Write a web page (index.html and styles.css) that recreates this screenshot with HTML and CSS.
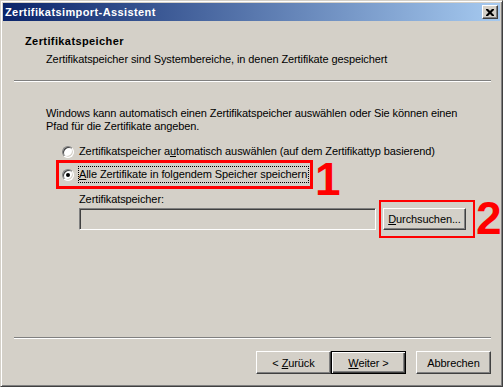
FILE: index.html
```html
<!DOCTYPE html>
<html lang="de">
  <head>
    <meta charset="UTF-8" />
    <title>Zertifikatsimport-Assistent</title>
    <link rel="stylesheet" href="styles.css">
  </head>
  <body>
    <div class="window">
      <div class="titlebar">
        <span class="title">Zertifikatsimport-Assistent</span>
        <button class="close" type="button">
          <svg width="8" height="7" viewBox="0 0 8 7">
            <path d="M0 0h2l2 2 2-2h2v1l-2.5 2.5L8 6v1H6L4 5 2 7H0V6l2.5-2.5L0 1z" fill="#000" />
          </svg>
        </button>
      </div>

      <div class="header">
        <div class="header-title">Zertifikatspeicher</div>
        <div class="header-sub">Zertifikatspeicher sind Systembereiche, in denen Zertifikate gespeichert</div>
      </div>
      <div class="sep"></div>

      <div class="content">
        <p class="intro">
          Windows kann automatisch einen Zertifikatspeicher auswählen oder Sie können einen<br />
          Pfad für die Zertifikate angeben.
        </p>
        <div class="options">
          <label class="option">
            <span class="radio"></span>
            <span class="option-text">Zertifikatspeicher a<u>u</u>tomatisch auswählen (auf dem Zertifikattyp basierend)</span>
          </label>
          <label class="option">
            <span class="radio checked"></span>
            <span class="option-text focused"><u>A</u>lle Zertifikate in folgendem Speicher speichern</span>
          </label>
          <div class="store">
            <div class="store-label">Zertifikatspeicher:</div>
            <div class="store-row">
              <div class="textbox"></div>
              <button class="btn browse" type="button"><u>D</u>urchsuchen...</button>
            </div>
          </div>
        </div>
      </div>

      <div class="sep"></div>
      <div class="footer">
        <button class="btn" type="button">&lt; <u>Z</u>urück</button>
        <button class="btn default" type="button"><u>W</u>eiter &gt;</button>
        <button class="btn cancel" type="button">Abbrechen</button>
      </div>

      <!-- annotations drawn over the dialog -->
      <div class="mark mark-box-1"></div>
      <div class="mark mark-box-2"></div>
      <div class="mark-num num-1">1</div>
      <div class="mark-num num-2">2</div>
    </div>
  </body>
</html>
```

FILE: styles.css
```css
body {
  margin: 0;
  padding: 0;
  font-family: "Liberation Sans", Arial, sans-serif;
  font-size: 11px;
  line-height: 13px;
  letter-spacing: -0.1px;
  color: #000;
  background: #d4d0c8;
}
.window {
  position: relative;
  width: 503px;
  height: 387px;
  box-sizing: border-box;
  display: flex;
  flex-direction: column;
  padding: 2px;
  background: #d4d0c8;
  border: 1px solid;
  border-color: #d4d0c8 #404040 #404040 #d4d0c8;
  box-shadow: inset 1px 1px #fff, inset -1px -1px #808080;
}
.titlebar {
  height: 18px;
  display: flex;
  align-items: center;
  justify-content: space-between;
  padding-left: 2px;
  background: linear-gradient(to right, #0a246a, #a6caf0);
}
.title {
  color: #fff;
  font-weight: bold;
  letter-spacing: 0.4px;
}
.close {
  width: 16px;
  height: 14px;
  margin-right: 2px;
  padding: 0;
  display: flex;
  align-items: center;
  justify-content: center;
  background: #d4d0c8;
  border: 1px solid;
  border-color: #fff #404040 #404040 #fff;
  box-shadow: inset -1px -1px #808080;
}
.header {
  padding: 14px 0 14px 22px;
}
.header-title {
  font-weight: bold;
  letter-spacing: 0.4px;
}
.header-sub {
  margin-top: 5px;
  padding-left: 21px;
}
.sep {
  height: 0;
  margin: 0 9px 0 11px;
  border-top: 1px solid #808080;
  border-bottom: 1px solid #fff;
}
.content {
  flex: 1;
  padding-left: 43px;
}
.intro {
  margin: 25px 0 0;
}
.options {
  margin-top: 10px;
  padding-left: 16px;
}
.option {
  display: flex;
  align-items: center;
  gap: 4px;
}
.option + .option {
  margin-top: 6px;
}
.option-text {
  border: 1px solid transparent;
  padding: 1px 1px 1px 0;
}
.option-text.focused {
  border: 1px dotted #000;
}
.radio {
  position: relative;
  width: 12px;
  height: 12px;
  box-sizing: border-box;
  border-radius: 50%;
  background: #fff;
  border: 1px solid;
  border-color: #808080 #fff #fff #808080;
  box-shadow: inset 1px 1px #404040, inset -1px -1px #d4d0c8;
}
.radio.checked::after {
  content: "";
  position: absolute;
  left: 3px;
  top: 3px;
  width: 4px;
  height: 4px;
  border-radius: 50%;
  background: #000;
}
.store {
  margin-top: 10px;
  padding-left: 17px;
}
.store-row {
  display: flex;
  gap: 7px;
  margin-top: 2px;
}
.textbox {
  width: 297px;
  height: 22px;
  box-sizing: border-box;
  background: #d4d0c8;
  border: 1px solid;
  border-color: #808080 #fff #fff #808080;
  box-shadow: inset 1px 1px #404040, inset -1px -1px #d4d0c8;
}
.btn {
  width: 75px;
  height: 23px;
  padding: 0;
  box-sizing: border-box;
  font-family: inherit;
  font-size: 11px;
  letter-spacing: inherit;
  color: #000;
  background: #d4d0c8;
  border: 1px solid;
  border-color: #fff #404040 #404040 #fff;
  box-shadow: inset -1px -1px #808080;
}
.btn.browse {
  width: 83px;
  height: 22px;
}
.btn.default {
  border-color: #000;
  box-shadow: inset 1px 1px #fff, inset -1px -1px #404040, inset -2px -2px #808080;
}
.btn.cancel {
  margin-left: 10px;
}
.footer {
  display: flex;
  justify-content: flex-end;
  padding: 12px 9px 10px 0;
}
.mark {
  position: absolute;
  box-sizing: border-box;
  border: 3px solid #ff0000;
}
.mark-box-1 {
  left: 55px;
  top: 159px;
  width: 257px;
  height: 29px;
}
.mark-box-2 {
  left: 378px;
  top: 199px;
  width: 96px;
  height: 38px;
  border-width: 2px;
}
.mark-num {
  position: absolute;
  color: #ff0000;
  font-weight: bold;
  font-size: 46px;
  line-height: 34px;
  letter-spacing: 0;
}
.num-1 {
  left: 314px;
  top: 161px;
}
.num-2 {
  left: 475px;
  top: 200px;
}
```
